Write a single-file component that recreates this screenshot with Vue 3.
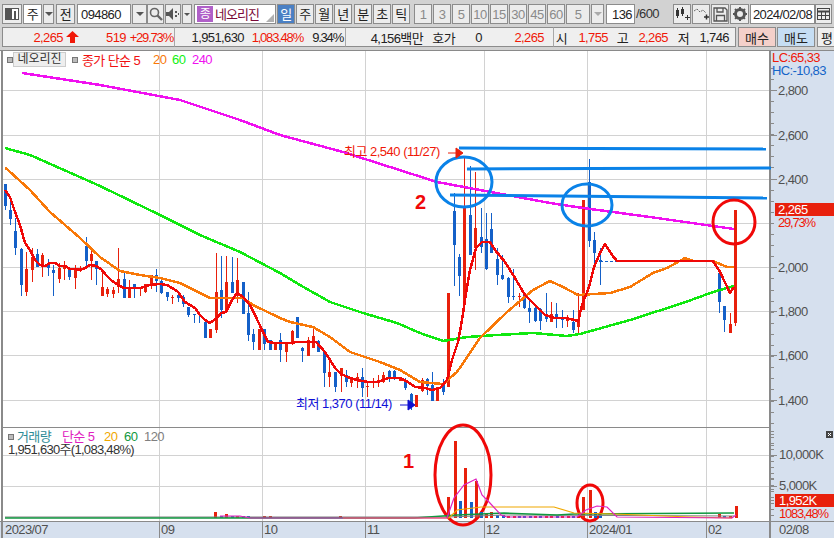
<script setup>
const periodDay = ['일', '주', '월', '년']
const periodMin = ['분', '초', '틱']
const minutes = ['1', '3', '5', '10', '15', '30', '45', '60']

// width = distance from the previous cell's right edge to this cell's right edge
const seg1 = [
  { t: '2,265', w: 59, c: 'up' },
  { arrow: true, w: 16 },
  { t: '519', w: 47, c: 'up' },
  { t: '+29.73%', w: 47, c: 'up pct' },
]
const seg2 = [
  { t: '1,951,630', w: 69 },
  { t: '1,083.48%', w: 59, c: 'up pct' },
  { t: '9.34%', w: 40, c: 'pct' },
]
const seg3 = [
  { t: '4,156백만', w: 77 },
  { t: '호가', w: 32 },
  { t: '0', w: 27 },
  { t: '2,265', w: 62, c: 'up' },
]
const seg4 = [
  { t: '시', w: 12 },
  { t: '1,755', w: 41, c: 'up' },
  { t: '고', w: 20 },
  { t: '2,265', w: 40, c: 'up' },
  { t: '저', w: 21 },
  { t: '1,746', w: 40 },
]

const gridX = [159, 262, 365, 484, 587, 706]
const gridY = [90, 135, 179, 223, 267, 311, 355, 400]
const volGridY = [455, 486]

const priceLabels = [
  ['2,800', 90], ['2,600', 135], ['2,400', 179], ['2,000', 267],
  ['1,800', 311], ['1,600', 355], ['1,400', 400],
]
const volLabels = [['10,000K', 454], ['5,000K', 485]]
const dateLabels = [
  ['2023/07', 5], ['09', 161], ['10', 264], ['11', 367],
  ['12', 486], ['2024/01', 589], ['02', 708], ['02/08', 779],
]

const minorTicks = Array.from({ length: 40 }, (_, i) => 68 + i * 11.1)
const volTicks = Array.from({ length: 15 }, (_, i) => 431 + i * 6.07)

// x, wick top, wick bottom, body top, body bottom, r(ed)/b(lue)
const candles = [
  [5, 184, 210, 184, 206, 'b'], [10, 202, 225, 210, 219, 'b'], [15, 218, 255, 231, 248, 'b'],
  [21, 248, 296, 249, 285, 'b'], [26, 252, 296, 269, 292, 'r'], [32, 248, 282, 257, 270, 'r'],
  [37, 249, 267, 254, 267, 'b'], [42, 253, 277, 255, 265, 'r'], [48, 259, 276, 263, 268, 'b'],
  [53, 265, 296, 270, 273, 'b'], [59, 263, 283, 268, 279, 'r'], [64, 261, 280, 265, 269, 'r'],
  [69, 267, 280, 268, 277, 'b'], [75, 265, 289, 269, 278, 'r'], [80, 266, 272, 268, 269, 'r'],
  [86, 237, 267, 246, 261, 'b'], [91, 250, 280, 254, 261, 'r'], [96, 261, 285, 261, 269, 'b'],
  [102, 272, 296, 287, 296, 'r'], [107, 287, 297, 289, 294, 'r'], [113, 287, 298, 290, 294, 'r'],
  [118, 248, 293, 279, 287, 'r'], [124, 272, 298, 279, 298, 'b'], [129, 280, 298, 289, 298, 'r'],
  [134, 284, 298, 284, 289, 'b'], [140, 287, 296, 288, 289, 'r'], [145, 284, 293, 284, 292, 'r'],
  [151, 275, 289, 275, 285, 'r'], [156, 269, 292, 275, 281, 'b'], [161, 280, 294, 281, 293, 'b'],
  [167, 292, 301, 292, 297, 'b'], [172, 295, 304, 297, 298, 'r'], [178, 292, 302, 295, 298, 'b'],
  [183, 295, 307, 297, 304, 'b'], [188, 307, 317, 307, 315, 'b'], [194, 314, 323, 314, 315, 'b'],
  [199, 314, 323, 314, 315, 'b'], [205, 322, 338, 322, 338, 'b'], [210, 329, 338, 329, 338, 'r'],
  [216, 253, 333, 292, 330, 'r'], [221, 256, 318, 290, 310, 'b'], [226, 256, 313, 282, 311, 'r'],
  [232, 257, 293, 282, 293, 'b'], [237, 258, 303, 280, 296, 'r'], [243, 282, 314, 282, 314, 'b'],
  [248, 292, 341, 313, 335, 'b'], [253, 329, 350, 334, 342, 'b'], [259, 329, 350, 329, 350, 'r'],
  [264, 329, 350, 329, 344, 'b'], [270, 340, 350, 340, 350, 'b'], [275, 343, 350, 343, 350, 'r'],
  [280, 333, 362, 340, 350, 'b'], [286, 342, 362, 343, 352, 'r'], [292, 330, 345, 331, 343, 'r'],
  [297, 317, 338, 317, 338, 'b'], [302, 347, 362, 348, 351, 'b'], [308, 337, 356, 340, 356, 'r'],
  [313, 327, 348, 336, 348, 'r'], [318, 340, 352, 341, 352, 'b'], [324, 352, 387, 352, 373, 'b'],
  [329, 362, 387, 372, 377, 'r'], [335, 372, 392, 372, 387, 'b'], [341, 368, 392, 368, 376, 'r'],
  [346, 370, 387, 375, 382, 'b'], [351, 377, 387, 379, 383, 'r'], [357, 373, 388, 377, 379, 'r'],
  [362, 368, 397, 377, 388, 'b'], [367, 382, 397, 386, 387, 'r'], [373, 378, 388, 382, 383, 'r'],
  [378, 375, 387, 380, 383, 'r'], [383, 372, 383, 375, 382, 'r'], [389, 370, 382, 371, 379, 'b'],
  [394, 370, 380, 371, 379, 'b'], [400, 378, 381, 378, 381, 'r'], [405, 378, 390, 381, 388, 'b'],
  [411, 393, 410, 394, 407, 'b'], [416, 395, 407, 395, 407, 'r'], [422, 378, 392, 380, 391, 'r'],
  [427, 378, 395, 379, 386, 'b'], [432, 372, 401, 385, 401, 'b'], [437, 387, 401, 387, 401, 'r'],
  [443, 379, 395, 385, 392, 'b'], [448, 293, 387, 293, 387, 'r'], [454, 193, 286, 211, 245, 'b'],
  [459, 254, 296, 257, 276, 'b'], [464, 158, 312, 208, 303, 'r'], [470, 166, 255, 215, 255, 'b'],
  [475, 172, 270, 228, 248, 'r'], [481, 208, 253, 237, 247, 'b'], [486, 213, 270, 239, 269, 'b'],
  [491, 213, 253, 229, 253, 'b'], [497, 248, 285, 259, 275, 'b'], [502, 255, 280, 275, 279, 'b'],
  [508, 277, 303, 278, 297, 'b'], [513, 269, 300, 296, 297, 'b'], [519, 293, 307, 296, 297, 'r'],
  [524, 293, 309, 295, 308, 'b'], [529, 299, 323, 308, 312, 'b'], [535, 307, 322, 308, 321, 'b'],
  [540, 308, 330, 309, 321, 'b'], [546, 293, 322, 316, 319, 'b'], [551, 302, 322, 314, 322, 'r'],
  [556, 303, 328, 314, 318, 'b'], [562, 310, 328, 318, 320, 'b'], [567, 315, 327, 318, 321, 'r'],
  [573, 310, 333, 322, 330, 'b'], [578, 293, 335, 321, 327, 'r'], [583, 200, 310, 200, 310, 'r'],
  [589, 159, 247, 182, 241, 'b'], [594, 232, 268, 240, 253, 'b'], [600, 248, 285, 260, 262, 'b'],
  [719, 273, 313, 273, 302, 'b'], [724, 306, 332, 306, 320, 'b'], [730, 313, 333, 324, 333, 'r'],
  [735, 210, 326, 210, 323, 'r'],
]

const toPoints = pts => pts.map(p => p.join(',')).join(' ')

const ma5 = toPoints([
  [5, 190], [10, 197], [15, 212], [20, 225], [25, 243], [30, 250], [35, 260], [40, 265], [45, 266],
  [50, 263], [55, 263], [60, 266], [65, 266], [70, 269], [75, 269], [80, 270], [85, 268], [90, 265],
  [96, 266], [101, 269], [106, 275], [112, 281], [118, 285], [124, 288], [130, 288], [140, 288],
  [150, 285], [160, 284], [167, 285], [172, 288], [178, 292], [185, 302], [195, 308], [200, 315],
  [205, 320], [210, 323], [216, 319], [221, 313], [226, 312], [232, 300], [237, 293], [243, 297],
  [250, 305], [255, 315], [262, 330], [268, 342], [275, 343], [290, 343], [297, 342], [316, 342],
  [325, 352], [335, 368], [341, 374], [350, 378], [357, 380], [368, 382], [378, 382], [388, 378],
  [400, 378], [408, 382], [415, 387], [425, 388], [432, 390], [440, 388], [447, 380], [452, 360],
  [458, 342], [462, 320], [465, 300], [470, 270], [476, 248], [482, 242], [490, 242], [495, 250],
  [505, 262], [515, 278], [525, 295], [535, 305], [545, 315], [555, 318], [565, 318], [575, 320],
  [578, 322], [582, 305], [589, 287], [594, 267], [600, 253], [605, 244], [612, 255], [617, 261],
  [713, 261], [720, 272], [730, 293], [734, 287],
])
const ma20 = toPoints([
  [5, 168], [8, 170], [30, 190], [50, 212], [80, 238], [100, 257], [120, 271], [140, 275], [160, 278],
  [180, 283], [210, 298], [243, 298], [253, 305], [280, 318], [290, 322], [313, 327], [330, 337],
  [350, 352], [380, 362], [400, 370], [420, 382], [443, 384], [457, 372], [480, 338], [507, 312],
  [533, 290], [550, 281], [563, 287], [578, 295], [610, 293], [630, 287], [653, 273], [667, 268],
  [685, 258], [693, 261], [713, 261], [727, 267], [734, 267],
])
const ma60 = toPoints([
  [5, 148], [30, 155], [64, 170], [100, 186], [160, 215], [200, 235], [240, 252], [280, 273], [300, 285],
  [330, 302], [363, 313], [397, 323], [420, 333], [443, 341], [467, 337], [497, 335], [533, 333],
  [567, 336], [580, 334], [630, 320], [683, 303], [713, 292], [734, 286],
])
const ma240 = toPoints([
  [22, 73], [100, 85], [180, 100], [240, 120], [280, 135], [343, 152], [437, 182], [550, 203],
  [583, 208], [650, 217], [734, 229],
])

// x, top, r/b  (all volume bars stand on y=518)
const volBars = [
  [215, 512, 'r'], [221, 516, 'b'], [226, 514, 'r'], [232, 516, 'b'], [237, 516, 'r'], [243, 516, 'b'],
  [248, 516, 'b'], [264, 516, 'r'], [270, 516, 'r'], [340, 516, 'r'],
  [448, 497, 'r'], [455, 441, 'r'], [460, 501, 'b'], [465, 468, 'r'], [471, 502, 'b'], [476, 481, 'r'],
  [481, 512, 'b'], [486, 514, 'r'], [491, 512, 'r'], [497, 515, 'b'], [503, 515, 'b'], [508, 516, 'r'],
  [514, 516, 'r'], [519, 516, 'b'], [524, 516, 'b'], [530, 516, 'b'], [535, 516, 'r'], [540, 516, 'b'],
  [546, 516, 'r'], [551, 516, 'r'], [557, 516, 'b'], [562, 516, 'r'], [568, 516, 'r'], [573, 516, 'b'],
  [578, 516, 'r'], [583, 497, 'r'], [590, 490, 'r'], [595, 512, 'b'], [600, 515, 'b'],
  [719, 514, 'r'], [724, 516, 'b'], [730, 516, 'r'], [736, 506, 'r'],
]
const volMa5 = toPoints([
  [220, 516], [240, 516], [250, 518], [447, 518], [454, 498], [464, 485], [476, 479], [482, 495], [489, 502],
  [501, 515], [507, 517], [577, 517], [586, 510], [597, 506], [607, 507], [617, 517], [732, 518], [736, 515],
])
const volMa20 = toPoints([
  [343, 518], [360, 518], [449, 518], [457, 510], [481, 507], [554, 507], [574, 513], [614, 514], [690, 517], [732, 518],
])
const volMa60 = toPoints([
  [5, 518], [414, 518], [457, 515], [504, 513], [557, 515], [574, 514], [734, 513],
])
const volMa120 = toPoints([
  [5, 517], [448, 517], [504, 515], [734, 516],
])
</script>

<template>
  <div class="hts">
    <div class="toolbar">
      <button class="tb w20">
        <svg width="14" height="14" viewBox="0 0 14 14">
          <rect x="0.5" y="1.5" width="13" height="11" fill="#fff" stroke="#555" />
          <rect x="1" y="2" width="6" height="10" fill="#555" />
          <rect x="9" y="4" width="2" height="8" fill="#555" />
        </svg>
      </button>
      <button class="tb white w19 ml1">주</button>
      <button class="tb w11 ml1"><i class="caret"></i></button>
      <button class="tb w19 ml2">전</button>
      <div class="tb white code ml2">094860</div>
      <button class="tb w15 ml1"><i class="caret"></i></button>
      <button class="tb w17">
        <svg width="14" height="14" viewBox="0 0 14 14" fill="none" stroke="#666">
          <circle cx="5.5" cy="5.5" r="4" stroke-width="1.6" />
          <path d="M8.5 8.5 13 13" stroke-width="2.4" />
        </svg>
      </button>
      <button class="tb w16 ml1">
        <svg width="14" height="14" viewBox="0 0 14 14" fill="#555">
          <path d="M0 5h3l4-4v12L3 9H0z" />
          <rect x="9" y="4" width="2" height="2" />
          <rect x="9" y="8" width="2" height="2" />
          <rect x="12" y="6" width="1" height="2" />
        </svg>
      </button>
      <button class="tb w10 ml1"><i class="caret small"></i></button>
      <div class="tb white name ml2">
        <span class="chip">종</span>
        <span class="name-text">네오리진</span>
        <i class="corner"></i>
      </div>
      <button v-for="(p, i) in periodDay" :key="p" class="tb w18 ml1" :class="{ active: i === 0 }">{{ p }}</button>
      <button v-for="(p, i) in periodMin" :key="p" class="tb w18" :class="i === 0 ? 'ml2' : 'ml1'">{{ p }}</button>
      <button v-for="(m, i) in minutes" :key="m" class="tb w18 off" :class="i === 0 ? 'ml4' : 'ml1'">{{ m }}</button>
      <div class="tb off w24 ml1">5</div>
      <button class="tb w13 ml1"><i class="caret light"></i></button>
      <div class="tb white count ml2">136</div>
      <span class="total">/600</span>
      <button class="tb w18 ml11">
        <svg width="15" height="14" viewBox="0 0 15 14" fill="#333">
          <rect x="1" y="3" width="3" height="6" /><rect x="2" y="1" width="1" height="10" />
          <rect x="6" y="2" width="3" height="5" /><rect x="7" y="0" width="1" height="9" />
          <path d="M10 10h2V8h1v2h2v1h-2v2h-1v-2h-2z" />
        </svg>
      </button>
      <button class="tb w18 ml1">
        <svg width="15" height="14" viewBox="0 0 15 14" fill="none" stroke="#666">
          <path d="M0 4l3-2 3 3 3-2 3 3" stroke-dasharray="2 1" />
          <path d="M10 10h5M12.5 7.5v5" stroke="#333" stroke-width="1.5" />
        </svg>
      </button>
      <button class="tb w18 ml1">
        <svg width="15" height="15" viewBox="0 0 15 15" fill="none" stroke="#555" stroke-width="1.3">
          <path d="M1 1h11l2 2v11H1z" />
          <path d="M4 1v4h6V1M3.500 14V8.500h8V14" />
        </svg>
      </button>
      <button class="tb w19 ml1">
        <svg width="14" height="14" viewBox="0 0 14 14">
          <circle cx="7" cy="7" r="4.500" fill="none" stroke="#555" stroke-width="3" />
          <path d="M7 0v14M0 7h14M2 2l10 10M12 2 2 12" stroke="#555" stroke-width="2" stroke-dasharray="2.500 9" />
        </svg>
      </button>
      <div class="tb white date ml1">2024/02/08</div>
      <button class="tb w17">
        <svg width="13" height="12" viewBox="0 0 13 12" fill="none" stroke="#444">
          <rect x="0.500" y="0.500" width="12" height="11" />
          <path d="M0 3.500h13" stroke-width="2" />
          <path d="M4.500 3v9M8.500 3v9M0 7.500h13" />
        </svg>
      </button>
    </div>

    <div class="inforow">
      <div class="seg s1">
        <template v-for="(c, i) in seg1" :key="i">
          <span v-if="c.arrow" class="cell" :style="{ width: c.w + 'px' }">
            <svg width="13" height="12" viewBox="0 0 13 12"><path d="M6.500 0 13 6H9v6H4V6H0z" fill="#f01808" /></svg>
          </span>
          <span v-else class="cell" :class="c.c" :style="{ width: c.w + 'px' }">{{ c.t }}</span>
        </template>
      </div>
      <div class="seg s2">
        <span v-for="(c, i) in seg2" :key="i" class="cell" :class="c.c" :style="{ width: c.w + 'px' }">{{ c.t }}</span>
      </div>
      <div class="seg s3">
        <span v-for="(c, i) in seg3" :key="i" class="cell" :class="c.c" :style="{ width: c.w + 'px' }">{{ c.t }}</span>
      </div>
      <div class="seg s4">
        <span v-for="(c, i) in seg4" :key="i" class="cell" :class="c.c" :style="{ width: c.w + 'px' }">{{ c.t }}</span>
      </div>
      <button class="order buy">매수</button>
      <button class="order sell">매도</button>
      <button class="order flat">평</button>
    </div>

    <div class="chart">
      <svg class="canvas" width="834" height="488" viewBox="0 50 834 488">
        <rect x="771" y="50" width="63" height="488" fill="#d6e0ee" />
        <rect x="0" y="521" width="834" height="17" fill="#d6e0ee" />

        <g stroke="#d2d2d2" stroke-width="1" shape-rendering="crispEdges">
          <line v-for="x in gridX" :key="x" :x1="x" :x2="x" y1="50" y2="521" />
          <line v-for="y in gridY" :key="y" x1="3" x2="770" :y1="y" :y2="y" />
          <line v-for="y in volGridY" :key="y" x1="3" x2="770" :y1="y" :y2="y" />
        </g>
        <g stroke="#8a8a8a" shape-rendering="crispEdges">
          <line x1="0" x2="834" y1="50" y2="50" stroke-width="2" />
          <line x1="2" x2="2" y1="50" y2="538" stroke-width="2" />
          <line x1="3" x2="770" y1="427" y2="427" />
          <line x1="0" x2="834" y1="521" y2="521" />
          <line x1="770" x2="770" y1="50" y2="538" stroke-width="2" />
          <line v-for="x in gridX" :key="x" :x1="x" :x2="x" y1="521" y2="538" />
          <line v-for="y in minorTicks" :key="y" x1="771" x2="774" :y1="y" :y2="y" />
          <line v-for="l in priceLabels" :key="l[0]" x1="771" x2="777" :y1="l[1]" :y2="l[1]" />
          <line v-for="y in volTicks" :key="y" x1="771" x2="774" :y1="y" :y2="y" />
          <line x1="771" x2="777" y1="455" y2="455" />
          <line x1="771" x2="777" y1="486" y2="486" />
        </g>

        <!-- candles -->
        <g shape-rendering="crispEdges">
          <g v-for="c in candles" :key="c[0]" :fill="c[5] === 'r' ? '#e8200c' : '#1460c8'">
            <rect :x="c[0]" :y="c[1]" width="1" :height="c[2] - c[1]" />
            <rect :x="c[0] - 1" :y="c[3]" width="3" :height="Math.max(c[4] - c[3], 1)" />
          </g>
          <line x1="600" x2="713" y1="261" y2="261" stroke="#1460c8" stroke-dasharray="3 2" />
        </g>

        <!-- moving averages -->
        <g fill="none" stroke-width="2.500" stroke-linejoin="round" shape-rendering="crispEdges">
          <polyline :points="ma240" stroke="#f010f0" />
          <polyline :points="ma60" stroke="#10e810" />
          <polyline :points="ma20" stroke="#f87808" />
          <polyline :points="ma5" stroke="#f00808" />
        </g>

        <!-- hand drawn marks -->
        <g fill="none" stroke="#0a82e8" stroke-width="3">
          <line x1="459" y1="148" x2="766" y2="149" />
          <line x1="467" y1="169" x2="771" y2="168" />
          <line x1="450" y1="195" x2="767" y2="198" />
          <ellipse cx="464" cy="182" rx="28" ry="25" />
          <ellipse cx="587" cy="205" rx="25" ry="21" />
        </g>
        <g fill="none" stroke="#f00808" stroke-width="3">
          <ellipse cx="734" cy="222" rx="21" ry="22" />
          <ellipse cx="463" cy="475" rx="28" ry="50" />
          <ellipse cx="590" cy="503" rx="13" ry="18" />
        </g>
        <text x="415" y="209" class="mark">2</text>
        <text x="403" y="468" class="mark">1</text>

        <text x="344" y="156" class="lbl red note">최고 2,540 (11/27)</text>
        <path d="M448 153h8M456 148l7 5-7 5z" fill="#e8200c" stroke="#e8200c" />
        <text x="296" y="408" class="lbl blue note">최저 1,370 (11/14)</text>
        <path d="M400 405h8M408 400l7 5-7 5z" fill="#1010d0" stroke="#1010d0" />

        <!-- volume -->
        <g shape-rendering="crispEdges">
          <rect v-for="b in volBars" :key="b[0]" :x="b[0] - 1" :y="b[1]" width="3" :height="518 - b[1]"
            :fill="b[2] === 'r' ? '#e8200c' : '#1460c8'" />
        </g>
        <g fill="none" stroke-width="1">
          <polyline :points="volMa120" stroke="#808080" />
          <polyline :points="volMa60" stroke="#109840" stroke-width="1.500" />
          <polyline :points="volMa20" stroke="#f0a800" stroke-width="1.200" />
          <polyline :points="volMa5" stroke="#e020c0" stroke-width="1.200" />
        </g>

        <!-- axes -->
        <text x="772" y="62" class="lbl red">LC:65,33</text>
        <text x="772" y="75" class="lbl blue2">HC:-10,83</text>
        <text v-for="l in priceLabels" :key="l[0]" x="778" :y="l[1] + 5" class="lbl axis">{{ l[0] }}</text>
        <rect x="775" y="203" width="59" height="13" fill="#e8200c" />
        <text x="778" y="214" class="lbl white">2,265</text>
        <text x="778" y="227" class="lbl red pct">29,73%</text>

        <rect x="826" y="431" width="7" height="7" fill="#444" />
        <path d="M828 433l3 3m0-3-3 3" stroke="#fff" />
        <text v-for="l in volLabels" :key="l[0]" x="779" :y="l[1] + 5" class="lbl axis">{{ l[0] }}</text>
        <rect x="775" y="494" width="59" height="13" fill="#e8200c" />
        <text x="779" y="505" class="lbl white">1,952K</text>
        <text x="779" y="518" class="lbl red pct">1083,48%</text>

        <text v-for="d in dateLabels" :key="d[1]" :x="d[1]" y="534" class="lbl axis">{{ d[0] }}</text>
      </svg>

      <div class="legend main-legend">
        <i class="sq"></i>
        <span class="stock-btn">네오리진</span>
        <i class="sq"></i>
        <span class="red-t l-name">종가 단순 5</span>
        <span class="or-t">20</span>
        <span class="gr-t">60</span>
        <span class="mg-t">240</span>
      </div>

      <div class="legend vol-legend">
        <div class="vol-row">
          <i class="sq"></i>
          <span class="teal">거래량</span>
          <span class="mag">단순 5</span>
          <span class="amb">20</span>
          <span class="grn">60</span>
          <span class="gry">120</span>
        </div>
        <div class="vol-sum">1,951,630주(1,083,48%)</div>
      </div>
    </div>
  </div>
</template>

<style>
html, body { margin: 0; background: #fff; overflow: hidden; }
</style>

<style scoped>
.hts {
  width: 834px;
  height: 538px;
  overflow: hidden;
  background: #d2d2d2;
  font-family: "Liberation Sans", "Noto Sans CJK KR", sans-serif;
  font-size: 13px;
  letter-spacing: -0.6px;
  color: #222;
}

.toolbar {
  display: flex;
  height: 27px;
  padding: 4px 0 0 2px;
  box-sizing: border-box;
}

.tb {
  height: 20px;
  padding: 0;
  margin: 0;
  flex: none;
  box-sizing: border-box;
  display: flex;
  align-items: center;
  justify-content: center;
  border: 1px solid #8c8c8c;
  background: #ececec;
  font-family: "Liberation Sans", "Noto Sans CJK KR", sans-serif;
  font-size: 13px;
  letter-spacing: -0.6px;
  line-height: 1;
  color: #222;
}

.white { background: #fff; }
.active { background: #4a80c4; color: #fff; }
.off { color: #8a8a8a; }

.w10 { width: 10px; }
.w11 { width: 11px; }
.w13 { width: 13px; }
.w15 { width: 15px; }
.w16 { width: 16px; }
.w17 { width: 17px; }
.w18 { width: 18px; }
.w19 { width: 19px; }
.w20 { width: 20px; }
.w24 { width: 24px; }
.ml1 { margin-left: 1px; }
.ml2 { margin-left: 2px; }
.ml4 { margin-left: 4px; }
.ml11 { margin-left: 11px; }

.caret {
  width: 0;
  height: 0;
  border-left: 4px solid transparent;
  border-right: 4px solid transparent;
  border-top: 4px solid #555;
}
.caret.small { border-left-width: 3px; border-right-width: 3px; border-top-width: 3px; }
.caret.light { border-top-color: #aaa; }

.code {
  width: 54px;
  justify-content: flex-start;
  padding-left: 3px;
}

.name {
  position: relative;
  width: 82px;
  justify-content: flex-start;
  padding-left: 2px;
}
.chip {
  width: 16px;
  height: 16px;
  background: #b060c8;
  color: #fff;
  display: flex;
  align-items: center;
  justify-content: center;
  font-size: 12px;
}
.name-text { margin-left: 2px; color: #7a0838; font-size: 13px; letter-spacing: -1px; }
.corner {
  position: absolute;
  right: 1px;
  bottom: 1px;
  border-left: 8px solid transparent;
  border-bottom: 8px solid #b0b0b0;
}

.count {
  width: 29px;
  justify-content: flex-end;
  padding-right: 2px;
}
.total {
  width: 26px;
  margin-left: 1px;
  line-height: 20px;
  color: #333;
}
.date { width: 65px; }

.inforow {
  display: flex;
  height: 23px;
  padding-left: 2px;
  box-sizing: border-box;
}

.seg {
  height: 20px;
  flex: none;
  box-sizing: border-box;
  display: flex;
  align-items: center;
  background: #efefef;
  border-top: 1px solid #8c8c8c;
  border-bottom: 1px solid #8c8c8c;
  border-right: 1px solid #a8a8a8;
}
.s1 { width: 173px; border-left: 1px solid #8c8c8c; padding-left: 1px; }
.s2 { width: 171px; }
.s3 { width: 208px; }
.s4 { width: 182px; padding-left: 1px; border-right: 1px solid #8c8c8c; }

.cell {
  flex: none;
  display: flex;
  justify-content: flex-end;
  white-space: nowrap;
}
.up { color: #f01808; }
.pct { letter-spacing: -1.2px; }

.order {
  width: 38px;
  height: 20px;
  margin: 0 0 0 1px;
  padding: 0;
  flex: none;
  box-sizing: border-box;
  border: 1px solid #8c8c8c;
  font-family: "Noto Sans CJK KR", sans-serif;
  font-size: 13px;
  color: #222;
}
.buy { background: #f4d0ca; margin-left: 2px; }
.sell { background: #c6def4; }
.flat { background: #efefef; width: 20px; margin-left: 2px; }

.chart {
  position: relative;
  height: 488px;
  background: #fff;
}
.canvas { display: block; }

.lbl {
  font-family: "Liberation Sans", "Noto Sans CJK KR", sans-serif;
  font-size: 13px;
  letter-spacing: -0.6px;
}
.lbl.pct { letter-spacing: -1.2px; }
.note { letter-spacing: -0.5px; }
.axis { fill: #505050; }
.red { fill: #f01808; }
.blue { fill: #1010d8; }
.blue2 { fill: #1464c8; }
.white { fill: #fff; }
.mark {
  font-family: "Liberation Sans", sans-serif;
  font-size: 20px;
  font-weight: 700;
  fill: #f00808;
}

.legend { position: absolute; white-space: nowrap; }

.main-legend {
  top: 2px;
  left: 7px;
  display: flex;
  align-items: center;
  height: 15px;
}
.sq {
  width: 4px;
  height: 4px;
  flex: none;
  background: #bbb;
  border: 1px solid #777;
}
.stock-btn {
  width: 53px;
  height: 15px;
  margin: 0 6px 0 0;
  box-sizing: border-box;
  border: 1px solid #ccc;
  background: #eee;
  text-align: center;
  font-size: 12px;
  line-height: 13px;
  letter-spacing: 0;
  color: #333;
}
.l-name { margin-left: 4px; width: 71px; }
.red-t { color: #f01010; }
.or-t { width: 19px; color: #f87808; }
.gr-t { width: 20px; color: #10f010; }
.mg-t { color: #f010f0; }

.vol-legend { top: 380px; left: 8px; }
.vol-row { display: flex; align-items: center; height: 13px; line-height: 13px; }
.vol-row span { margin-left: 3px; }
.teal { width: 42px; color: #2e8b96; }
.mag { width: 39px; color: #e020c0; }
.amb { width: 17px; color: #f0a800; }
.grn { width: 17px; color: #109840; }
.gry { color: #808080; }
.vol-sum { height: 13px; line-height: 13px; color: #333; letter-spacing: -0.7px; }
</style>
